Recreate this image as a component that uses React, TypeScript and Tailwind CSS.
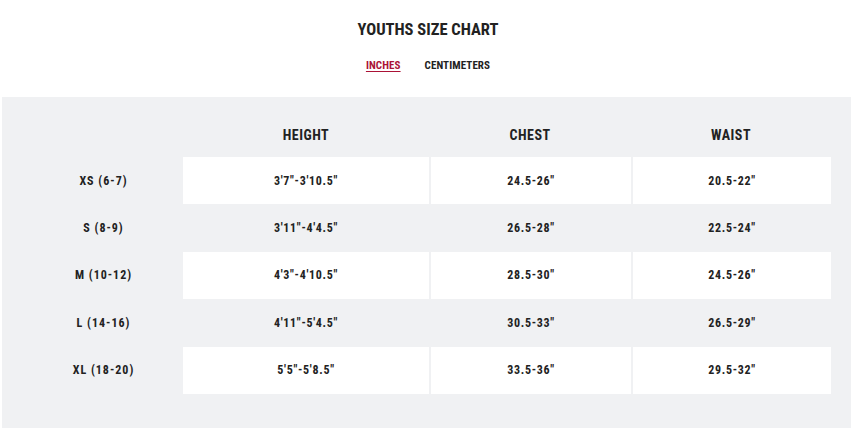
import React from "react";

const rows = [
  ["XS (6-7)", "3'7\"-3'10.5\"", "24.5-26\"", "20.5-22\""],
  ["S (8-9)", "3'11\"-4'4.5\"", "26.5-28\"", "22.5-24\""],
  ["M (10-12)", "4'3\"-4'10.5\"", "28.5-30\"", "24.5-26\""],
  ["L (14-16)", "4'11\"-5'4.5\"", "30.5-33\"", "26.5-29\""],
  ["XL (18-20)", "5'5\"-5'8.5\"", "33.5-36\"", "29.5-32\""],
];

export default function App() {
  return (
    <div className="w-[856px] h-[431px] bg-white text-[#222222] font-['Roboto_Condensed',sans-serif] font-bold">
      <div className="h-[97px] flex flex-col items-center">
        <h1 className="mt-[19px] text-[16.5px] leading-[22px]">YOUTHS SIZE CHART</h1>
        <div className="mt-[18px] flex gap-[24px] text-[11px] leading-[14px] tracking-[0.1px]">
          <span className="text-[#ab1236] underline underline-offset-[2px] decoration-[1px]">INCHES</span>
          <span>CENTIMETERS</span>
        </div>
      </div>
      <div className="ml-[2px] w-[849px] h-[331px] bg-[#f0f1f3] pl-[22px] pt-[20px]">
        <div className="grid grid-cols-[159px_246px_202px_200px] text-[12px] tracking-[0.7px]">
          <div className="h-[40px]" />
          <div className="h-[36px] flex items-center justify-center text-[14px] tracking-[0.5px]">HEIGHT</div>
          <div className="h-[36px] flex items-center justify-center text-[14px] tracking-[0.5px]">CHEST</div>
          <div className="h-[36px] flex items-center justify-center text-[14px] tracking-[0.5px]">WAIST</div>
          {rows.map((r, i) => {
            const white = i % 2 === 0;
            return (
              <React.Fragment key={r[0]}>
                <div className="h-[47.4px] flex items-center justify-center tracking-[1px]">{r[0]}</div>
                <div className={white ? "h-[47.4px] flex items-center justify-center bg-white" : "h-[47.4px] flex items-center justify-center"}>{r[1]}</div>
                <div className={white ? "h-[47.4px] flex items-center justify-center border-l-2 border-[#f0f1f3] bg-white" : "h-[47.4px] flex items-center justify-center border-l-2 border-[#f0f1f3]"}>{r[2]}</div>
                <div className={white ? "h-[47.4px] flex items-center justify-center border-l-2 border-[#f0f1f3] bg-white" : "h-[47.4px] flex items-center justify-center border-l-2 border-[#f0f1f3]"}>{r[3]}</div>
              </React.Fragment>
            );
          })}
        </div>
      </div>
    </div>
  );
}
